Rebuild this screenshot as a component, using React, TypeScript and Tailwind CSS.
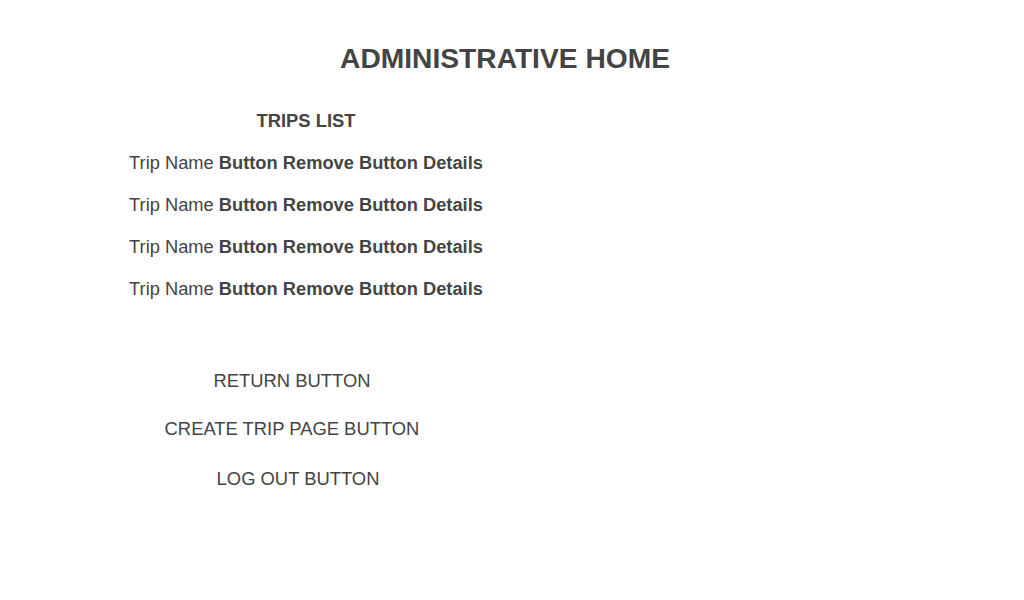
export default function App() {
  const trips = [1, 2, 3, 4];

  return (
    <main
      className="min-h-screen w-full bg-white text-[#444444]"
      style={{ fontFamily: '"Liberation Sans", Arial, sans-serif' }}
    >
      <h1 className="pt-[40px] pr-[14px] text-center text-[28.2px] font-bold leading-[36px]">
        ADMINISTRATIVE HOME
      </h1>

      <section className="flex w-[612px] flex-col items-center pt-[21px]">
        <h2 className="mb-[-3px] text-[18.4px] font-bold leading-[48px]">TRIPS LIST</h2>
        {trips.map((t) => (
          <div key={t} className="text-[18.3px] leading-[42px]">
            Trip Name <span className="font-bold">Button Remove Button Details</span>
          </div>
        ))}
      </section>

      <div className="flex w-[612px] flex-col items-center pt-[47px]">
        <button className="mr-[28px] text-[18.4px] leading-[48px]">RETURN BUTTON</button>
        <button className="mr-[28px] text-[18.4px] leading-[48px]">CREATE TRIP PAGE BUTTON</button>
        <button className="mr-[16px] text-[18.4px] leading-[52px]">LOG OUT BUTTON</button>
      </div>
    </main>
  );
}
